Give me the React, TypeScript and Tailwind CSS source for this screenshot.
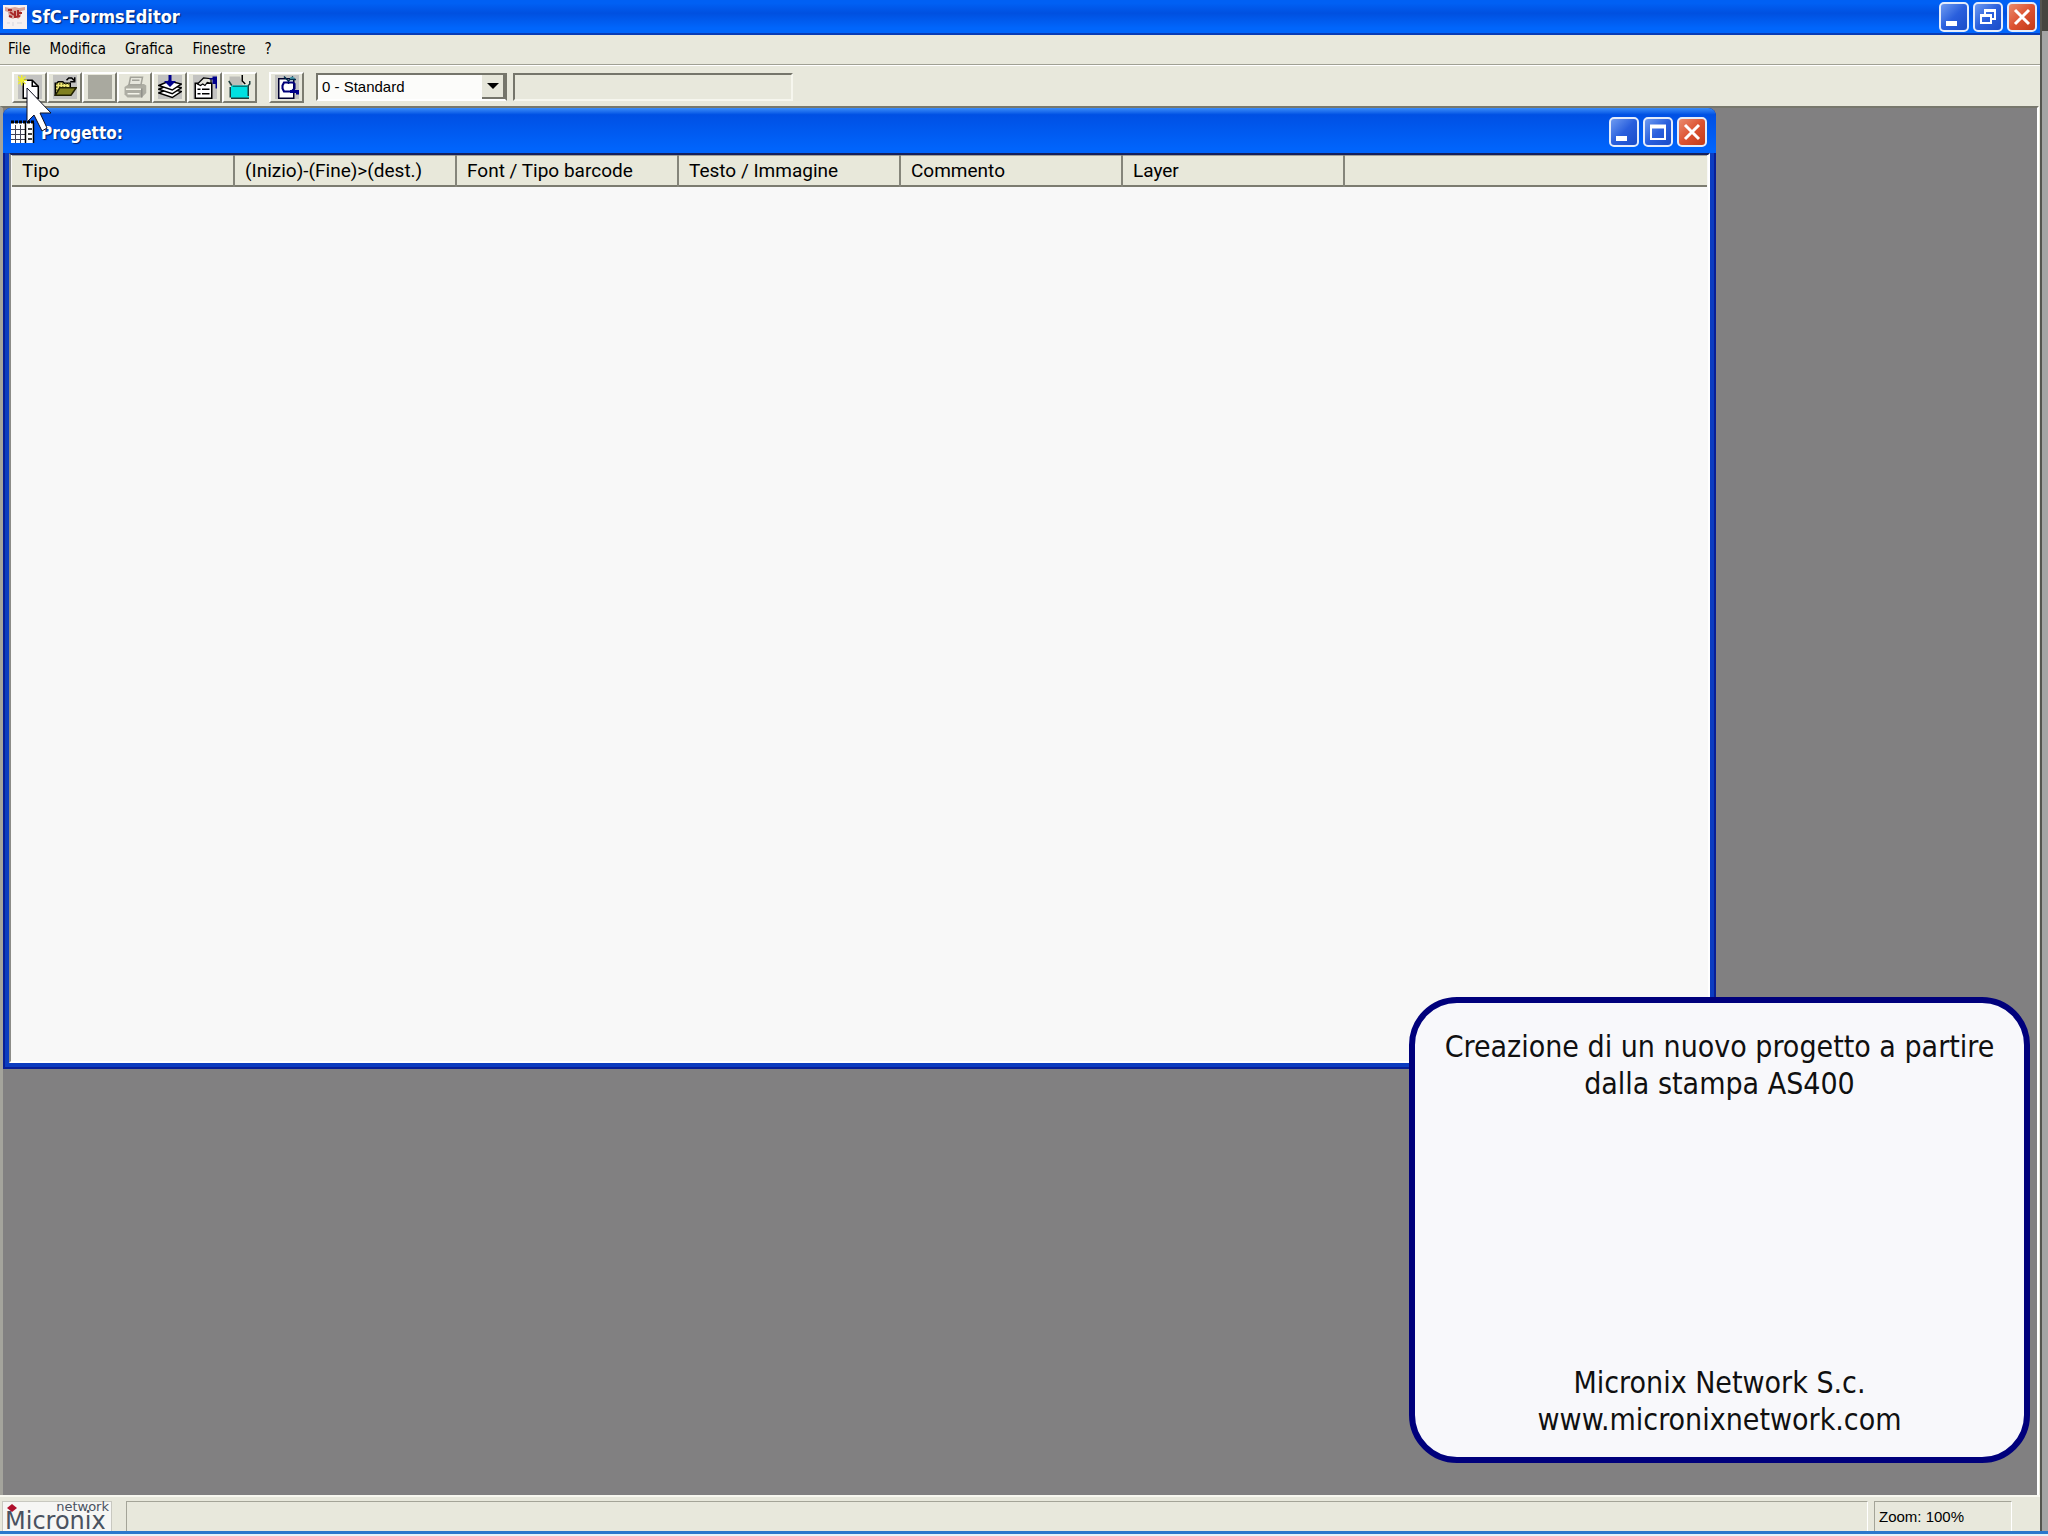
import type { ReactNode } from 'react';

const menus = ['File', 'Modifica', 'Grafica', 'Finestre', '?'];

const columns = [
  'Tipo',
  '(Inizio)-(Fine)>(dest.)',
  'Font / Tipo barcode',
  'Testo / Immagine',
  'Commento',
  'Layer',
];

interface IconProps {
  children?: ReactNode;
  bg?: string;
}

const Icon: React.FC<IconProps> = ({ children, bg = 'bg-[#c3c3c1]' }) => (
  <svg viewBox="0 0 16 16" className={`size-6 ${bg}`} aria-hidden="true">
    {children}
  </svg>
);

const NewIcon = () => (
  <Icon>
    <path d="M3.5 3.5h6l4 4v8h-10z" fill="#fff" stroke="#000" />
    <path d="M9.5 3.5v4h4" fill="none" stroke="#000" />
    <path d="M2.5 0v7M-1 3.5h7M0 1l5 5M5 1l-5 5" stroke="#eeee3a" />
  </Icon>
);

const OpenIcon = () => (
  <Icon>
    <path d="M1.5 13.5v-8h1l1-1h3l1 1h4v3" fill="#f0e878" stroke="#000" />
    <path d="M2 6h9M2 8h7M2 10h3" stroke="#606020" strokeDasharray="1 1" />
    <path d="M1.5 13.5l3-5h11l-3.5 5z" fill="#808020" stroke="#202000" />
    <path d="M9 3.5l1.5-1.5h2l2 2M14.5 1.5v3h-3" fill="none" stroke="#000" />
  </Icon>
);

const SaveIcon = () => <Icon bg="bg-[#a9a99f]" />;

const PrintIcon = () => (
  <Icon bg="bg-transparent">
    <path d="M1 8l3-2h10l1.5 1v5l-3 3H3l-2-2z" fill="#adada3" />
    <path d="M4 6.5l1-5h8l-1 5z" fill="#e6e6dc" stroke="#a3a39a" />
    <path d="M6 3.5h5" stroke="#a3a39a" />
    <path d="M2 9.5h10M3 12.5h8" stroke="#f4f4ea" />
    <path d="M12.5 9v6" stroke="#90908a" />
  </Icon>
);

const LayersIcon = () => (
  <Icon>
    <path d="M.5 12l7-3 8 2-6 4z" fill="#fff" stroke="#000" />
    <path d="M.5 9.5l7-3 8 2-6 4z" fill="#fff" stroke="#000" />
    <path d="M.5 7l7-3 8 2-6 4z" fill="#fff" stroke="#000" />
    <path d="M7 0h2v4h3L8 8 4 4h3z" fill="#00008b" />
  </Icon>
);

const PropertiesIcon = () => (
  <Icon>
    <path d="M1.5 5.5h11v10h-11z" fill="#fff" stroke="#000" />
    <path d="M3 9.5h2M6 9.5h5M3 12.5h2M6 12.5h5" stroke="#000" />
    <path d="M3 6l4-4 5 .5v3L9.5 5 8 7 6.5 6 5 7z" fill="#e4e4dc" stroke="#000" strokeWidth=".8" />
    <path d="M11 2.5h3" stroke="#00008b" />
    <path d="M13 1h3v8h-1V6h-2z" fill="#00008b" />
  </Icon>
);

const BoxIcon = () => (
  <Icon bg="bg-transparent">
    <path d="M1 1h7l2 6H1z" fill="#bdbdb8" />
    <path d="M9.5 0v4l2 2" fill="none" stroke="#000" />
    <path d="M2 7h12v8.5H2z" fill="#00e0e0" />
    <path d="M.5 4l2 3M2 15.5h12M13.5 14V7l1-1V4M1.5 8v7" fill="none" stroke="#1c3c3c" />
    <path d="M3 7.5h10" stroke="#007878" />
  </Icon>
);

const PreviewIcon = () => (
  <Icon>
    <path d="M2.5 2.5h10v13h-10z" fill="#fff" stroke="#000030" />
    <path d="M6 1l3 3M12 1L9 4v2M14 3h-4" fill="none" stroke="#00304c" />
    <path d="M8 5H6L5 7v2l1 2h5l2-2V6l-1-1z" fill="none" stroke="#000078" strokeWidth="1.4" />
    <path d="M10 10h6v3h-2v-1h-4z" fill="#00008b" />
    <path d="M10 2h3" stroke="#4fa8b8" />
  </Icon>
);

const tools = [
  { name: 'Nuovo', icon: <NewIcon /> },
  { name: 'Apri', icon: <OpenIcon /> },
  { name: 'Salva', icon: <SaveIcon />, disabled: true },
  { name: 'Stampa', icon: <PrintIcon />, disabled: true },
  { name: 'Importa', icon: <LayersIcon /> },
  { name: 'Opzioni', icon: <PropertiesIcon /> },
  { name: 'Contenitore', icon: <BoxIcon /> },
];

interface ToolButtonProps {
  name: string;
  disabled?: boolean;
  children: ReactNode;
}

const ToolButton: React.FC<ToolButtonProps> = ({ name, disabled, children }) => (
  <button
    type="button"
    aria-label={name}
    disabled={disabled}
    className="flex h-[31px] w-[35px] items-center justify-center border-2 border-t-white border-r-[#7b7b70] border-b-[#7b7b70] border-l-white bg-[#e6e6da]"
  >
    {children}
  </button>
);

const CaptionButtons: React.FC<{ middle: 'restore' | 'maximize' }> = ({ middle }) => {
  const base = 'size-[30px] rounded-[5px] border-2 border-[#e4ecfb]';
  const blue = 'bg-linear-to-br from-[#6f9af0] via-[#2a5fdd] to-[#1a4cc8]';
  return (
    <div className="flex gap-1">
      <button type="button" aria-label="Riduci a icona" className={`${base} ${blue}`}>
        <svg viewBox="0 0 26 26" aria-hidden="true">
          <path d="M5 17h11v5H5z" fill="#fff" />
        </svg>
      </button>
      <button type="button" aria-label="Ingrandisci" className={`${base} ${blue}`}>
        <svg viewBox="0 0 26 26" fill="none" stroke="#fff" aria-hidden="true">
          {middle === 'restore' ? (
            <>
              <path d="M10 10V6h10v9h-4" strokeWidth="2" />
              <path d="M10 6.5h11" strokeWidth="3" />
              <path d="M6 11h10v8H6z" strokeWidth="2" />
              <path d="M5 11.5h12" strokeWidth="3" />
            </>
          ) : (
            <>
              <path d="M6 7h14v13H6z" strokeWidth="2" />
              <path d="M5 7.5h16" strokeWidth="4" />
            </>
          )}
        </svg>
      </button>
      <button
        type="button"
        aria-label="Chiudi"
        className={`${base} bg-linear-to-br from-[#e98a6c] via-[#dc5231] to-[#c13a18]`}
      >
        <svg viewBox="0 0 26 26" aria-hidden="true">
          <path d="M6 6l14 14M20 6L6 20" stroke="#fff" strokeWidth="3" />
        </svg>
      </button>
    </div>
  );
};

const AppLogo = () => (
  <svg viewBox="0 0 24 24" className="size-6 bg-[#f6f0f0]" aria-hidden="true">
    <path d="M2 2l5 1 5-1 4 1 6-1v3l-4 1v5l-3 3-2-2-3 2-4-2-1-5-3-1z" fill="#d8a49c" />
    <path d="M5 5h4M7 7l4 3M12 6v7M15 5v6M6 11l3 1M15 8h4M13 12l4-1" stroke="#a82828" strokeWidth="2" />
    <path d="M4 18h3M10 17v4M14 18h5" stroke="#d5d5dc" />
  </svg>
);

const GridLogo = () => (
  <svg viewBox="0 0 24 24" className="size-6" aria-hidden="true">
    <path d="M0 3h23v20H0z" fill="#fff" />
    <path d="M0 2h23" stroke="#000" strokeWidth="3" strokeDasharray="3 1" />
    <path d="M4.5 5v18M9.5 5v18M0 9.5h14M0 14.5h14M0 19.5h14" stroke="#445" />
    <path d="M14.5 3v20M22.5 3v20M17 9h4M17 14h4M17 19h4" stroke="#000" strokeWidth="1.5" />
  </svg>
);

const ProjectWindow = () => (
  <section
    aria-label="Progetto"
    className="absolute top-0 left-0 flex h-[961px] w-[1713px] flex-col rounded-t-lg border-x-2 border-b-2 border-[#081f96] bg-[#0c3cc0] px-1 pb-1"
  >
    <header className="-mx-1.5 flex h-[45px] items-center rounded-t-lg bg-linear-to-b from-[#3a8cf8] from-0% via-[#0050e4] via-15% to-[#0064fc] to-90% pt-0.5 pr-[9px] pl-2">
      <GridLogo />
      <h2 className="flex-1 pt-1 pl-1.5 text-[17px] font-bold text-white [text-shadow:1px_1px_1px_#00206a]">
        Progetto:
      </h2>
      <CaptionButtons middle="maximize" />
    </header>
    <div className="flex-1 border-2 border-t-[#15205c] border-r-white border-b-white border-l-[#8c8c88] bg-[#f8f8f8] px-px">
      <table className="w-full table-fixed border-t border-[#a0a098] text-left font-[Roboto,sans-serif] text-[19px] leading-6">
        <thead>
          <tr className="h-[30px] border-b-2 border-[#7c7c70] bg-[#e8e8da]">
            {columns.map((col) => (
              <th
                key={col}
                scope="col"
                className="w-[222px] border-r-2 border-r-[#85857a] pt-0.5 pb-0 pl-2.5 font-normal whitespace-nowrap"
              >
                {col}
              </th>
            ))}
            <td />
          </tr>
        </thead>
        <tbody />
      </table>
    </div>
  </section>
);

const Callout = () => (
  <aside className="absolute right-[7px] bottom-8 flex h-[466px] w-[621px] flex-col justify-between rounded-[48px] border-[6px] border-[#00007c] bg-[#f8f8fb] px-5 pt-[25px] pb-[19px] text-center text-[30px] leading-[37px] text-[#101010]">
    <p>
      Creazione di un nuovo progetto a partire
      <br />
      dalla stampa AS400
    </p>
    <p>
      Micronix Network S.c.
      <br />
      www.micronixnetwork.com
    </p>
  </aside>
);

const MicronixLogo = () => (
  <div className="relative flex w-[110px] flex-col border border-b-0 border-[#c8c8c0] bg-[#f6f6f4] font-['DejaVu_Sans',sans-serif] text-[#4a5260]">
    <svg viewBox="0 0 10 8" className="absolute top-0.5 left-1 h-2 w-2.5" aria-hidden="true">
      <path d="M5 0l5 4-5 4-5-4z" fill="#b0102c" />
    </svg>
    <span className="pr-0.5 text-right text-[13px] leading-[10px]">network</span>
    <span className="pl-0.5 text-[24px] leading-[19px]">Micronix</span>
  </div>
);

const Cursor = () => (
  <svg viewBox="0 0 28 46" className="absolute top-[87px] left-[26px] h-[46px] w-7" aria-hidden="true">
    <path d="M1 1v34l7-7 8 16 5-3-7-15h11z" fill="#fff" stroke="#101020" />
  </svg>
);

const App: React.FC = () => {
  return (
    <div className="relative flex h-screen flex-col overflow-hidden bg-[#e8e8dc] font-['DejaVu_Sans_Condensed','DejaVu_Sans',sans-serif] text-black">
      <div className="flex min-h-0 flex-1">
        <div className="flex min-w-0 flex-1 flex-col border-r-2 border-[#55554f]">
          {/* title bar */}
          <header className="flex h-[35px] shrink-0 items-center border-b-2 border-[#0a3cb4] bg-linear-to-b from-[#0060f4] from-10% via-[#0050e0] via-40% to-[#0066fc] to-85% px-[3px]">
            <AppLogo />
            <h1 className="flex-1 pl-1 text-[18px] font-bold text-white [text-shadow:1px_1px_1px_#00206a]">
              SfC-FormsEditor
            </h1>
            <CaptionButtons middle="restore" />
          </header>

          {/* menu */}
          <nav className="flex h-[30px] shrink-0 items-center gap-[19px] border-b border-[#a0a094] pb-0.5 pl-2 text-[15px] leading-5">
            {menus.map((menu) => (
              <button type="button" key={menu}>
                {menu}
              </button>
            ))}
          </nav>

          {/* toolbar */}
          <div
            role="toolbar"
            className="flex h-[41px] shrink-0 items-center border-t border-white pt-0.5 pl-3"
          >
            {tools.map((tool) => (
              <ToolButton key={tool.name} name={tool.name} disabled={tool.disabled}>
                {tool.icon}
              </ToolButton>
            ))}
            <div className="pl-3">
              <ToolButton name="Anteprima">
                <PreviewIcon />
              </ToolButton>
            </div>
            <div className="relative ml-3 h-7 w-[191px] font-['Liberation_Sans',sans-serif] text-[15px]">
              <select
                aria-label="Livello"
                className="size-full appearance-none border-2 border-t-[#75756b] border-r-[#75756b] border-b-white border-l-[#75756b] bg-[#fcfcfa] pl-1"
              >
                <option>0 - Standard</option>
              </select>
              <span className="pointer-events-none absolute top-0.5 right-0.5 flex h-6 w-[23px] items-center justify-center border-r-2 border-b-2 border-[#75756b] bg-[#e6e6da]">
                <svg viewBox="0 0 12 6" className="h-1.5 w-3" aria-hidden="true">
                  <path d="M0 0h12L6 6z" />
                </svg>
              </span>
            </div>
            <input
              readOnly
              aria-label="Descrizione"
              className="ml-1.5 h-7 w-[280px] border-2 border-t-[#75756b] border-r-[#f6f6ee] border-b-[#f6f6ee] border-l-[#75756b]"
            />
          </div>

          {/* mdi area */}
          <main className="relative mr-px min-h-0 flex-1 border-t-2 border-r-2 border-l-[3px] border-t-[#77776c] border-r-white border-l-[#a4a49c] bg-[#818081]">
            <ProjectWindow />
            <Callout />
          </main>

          {/* status bar */}
          <footer className="flex h-9 shrink-0 border-t-2 border-[#f8f8f0] pt-1 pr-7 pl-0.5">
            <MicronixLogo />
            <div className="ml-3.5 flex-1 border-t border-r border-l border-t-[#a4a498] border-r-white border-l-[#a4a498]" />
            <div className="ml-1.5 flex w-[138px] items-center border-t border-r border-l border-t-[#a4a498] border-r-white border-l-[#a4a498] pl-1 font-['Liberation_Sans',sans-serif] text-[15px] leading-5">
              Zoom: 100%
            </div>
          </footer>
        </div>
        <div className="w-1.5 border-t-[31px] border-[#45453f] bg-[#a4a4a4]" />
      </div>
      <div className="h-[5px] shrink-0 border-t-3 border-[#2a78cc] bg-[#e4f4fc]" />
      <Cursor />
    </div>
  );
};

export default App;
